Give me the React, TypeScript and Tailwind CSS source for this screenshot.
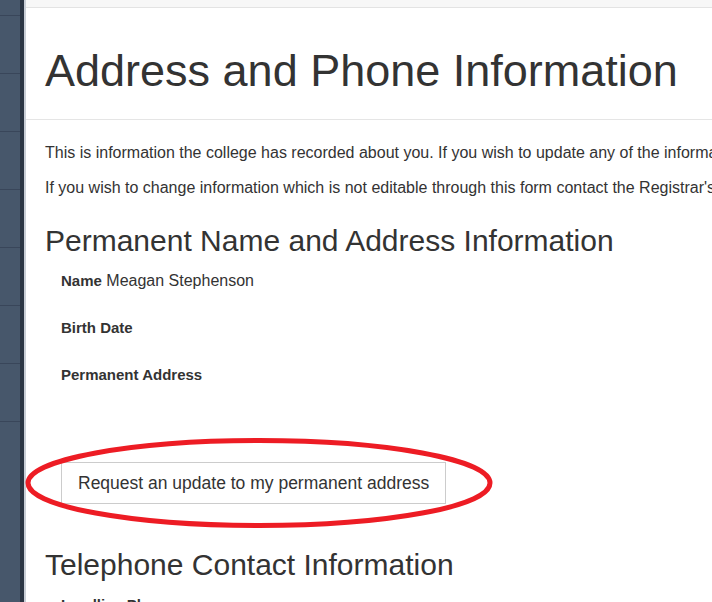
import React from "react";

const sideRows = [0, 1, 2, 3, 4, 5, 6];

function Field({ label, value }: { label: string; value?: string }) {
  return (
    <div className="pl-[16px] text-[16px] leading-[20px]">
      <span className="text-[15px] font-bold">{label}</span>
      {value && <span> {value}</span>}
    </div>
  );
}

export default function App() {
  return (
    <div
      className="relative flex h-screen overflow-hidden bg-white text-[#333]"
      style={{ fontFamily: '"Liberation Sans", Arial, Helvetica, sans-serif' }}
    >
      {/* side nav strip */}
      <aside className="w-[20px] shrink-0 bg-[#47576b]">
        <div className="h-[16px] border-b border-[#39465a]" />
        {sideRows.map((r) => (
          <div key={r} className="h-[58px] border-b border-[#39465a]" />
        ))}
      </aside>
      <div className="w-[4px] shrink-0 bg-[#2c3644]" />
      <div className="w-[2px] shrink-0 bg-[#c9ced6]" />

      <main className="min-w-0 flex-1">
        <div className="h-[8px] border-b border-[#e3e3e3] bg-[#f7f7f7]" />

        <div className="border-b border-[#e5e5e5] px-[19px] pt-[38px] pb-[23px]">
          <h1 className="whitespace-nowrap text-[45px] leading-[50px]">
            Address and Phone Information
          </h1>
        </div>

        <div className="px-[19px]">
          <p className="mt-[23px] whitespace-nowrap text-[16px] leading-[20px]">
            This is information the college has recorded about you. If you wish to update any of the information below, please use the links provided.
          </p>
          <p className="mt-[15px] whitespace-nowrap text-[16px] leading-[20px]">
            If you wish to change information which is not editable through this form contact the Registrar's Office.
          </p>

          <h2 className="mt-[26px] whitespace-nowrap text-[30px] leading-[33px]">
            Permanent Name and Address Information
          </h2>
          <div className="mt-[14px] flex flex-col gap-[27px]">
            <Field label="Name" value="Meagan Stephenson" />
            <Field label="Birth Date" />
            <Field label="Permanent Address" />
          </div>

          <button className="mt-[77px] ml-[16px] border border-[#cccccc] bg-white px-4 py-[8px] text-[17.5px] leading-[24px] text-[#333]">
            Request an update to my permanent address
          </button>

          <h2 className="mt-[44px] whitespace-nowrap text-[30px] leading-[33px]">
            Telephone Contact Information
          </h2>
          <div className="mt-[14px]">
            <Field label="Landline Phone" />
          </div>
        </div>
      </main>

      {/* red annotation circle */}
      <svg
        className="pointer-events-none absolute left-0 top-0"
        width="712"
        height="602"
        viewBox="0 0 712 602"
      >
        <ellipse cx="259" cy="483" rx="231" ry="42.5" fill="none" stroke="#ed1c24" strokeWidth="5" />
      </svg>
    </div>
  );
}
